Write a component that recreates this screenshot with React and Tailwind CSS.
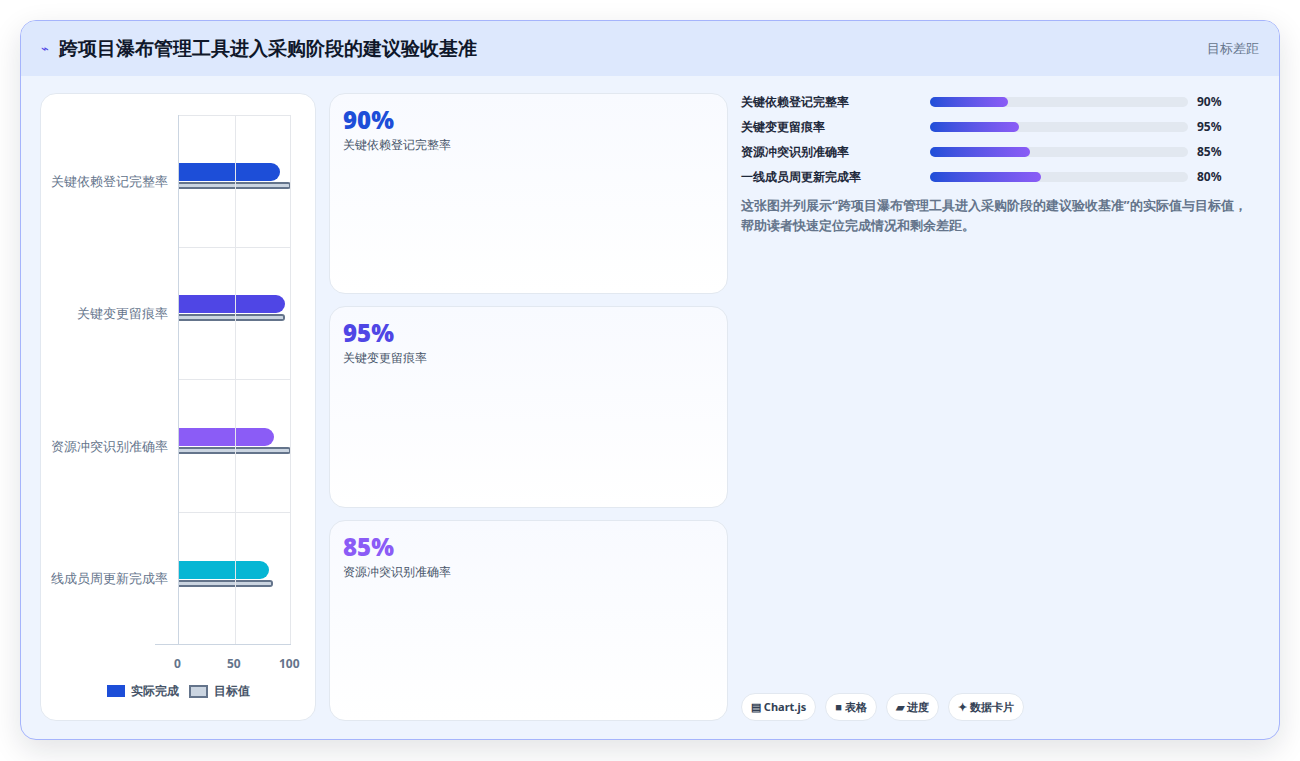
const rows = [
  { label: '关键依赖登记完整率', actual: 90, target: 100, color: 'bg-[#1d4ed8]' },
  { label: '关键变更留痕率', actual: 95, target: 95, color: 'bg-[#4f46e5]' },
  { label: '资源冲突识别准确率', actual: 85, target: 100, color: 'bg-[#8b5cf6]' },
  { label: '一线成员周更新完成率', actual: 80, target: 84, color: 'bg-[#06b6d4]' },
]

const cards = [
  { v: '90%', label: '关键依赖登记完整率', color: 'text-[#1d4ed8]' },
  { v: '95%', label: '关键变更留痕率', color: 'text-[#4f46e5]' },
  { v: '85%', label: '资源冲突识别准确率', color: 'text-[#8b5cf6]' },
]

const progress = [
  { label: '关键依赖登记完整率', w: 78, v: '90%' },
  { label: '关键变更留痕率', w: 89, v: '95%' },
  { label: '资源冲突识别准确率', w: 100, v: '85%' },
  { label: '一线成员周更新完成率', w: 111, v: '80%' },
]

function Chart() {
  return (
    <div className="flex w-[276px] shrink-0 flex-col rounded-2xl border border-[#e2e8f0] bg-white">
      <div className="flex pt-[21px]">
        <div className="flex w-[137px] flex-col">
          {rows.map((r) => (
            <div key={r.label} className="flex h-[132.5px] items-center justify-end overflow-hidden whitespace-nowrap pr-[10px] text-[13px] text-[#64748b]">
              <span>{r.label.length > 9 ? r.label.slice(1) : r.label}</span>
            </div>
          ))}
        </div>
        <div className="relative h-[530px] w-[112px] border-l border-[#cbd5e1]">
          <div className="absolute left-[56px] top-0 h-full w-px bg-[#e5e7eb]" />
          <div className="absolute left-[111px] top-0 h-full w-px bg-[#e5e7eb]" />
          <div className="absolute left-0 top-0 h-px w-full bg-[#e5e7eb]" />
          <div className="absolute -left-[24px] bottom-0 h-px w-[136px] bg-[#cbd5e1]" />
          {rows.map((r) => (
            <div key={r.label} className="flex h-[132.5px] flex-col justify-center border-b border-[#e5e7eb] last:border-b-0">
              <div className="mb-[10px] flex flex-col gap-px">
                <div className={`h-[18px] rounded-r-[9px] ${r.color}`} style={{ width: `${r.actual * 1.12}px` }} />
                <div className="h-[7px] rounded-r-[3px] border-2 border-l-0 border-[#64748b] bg-[#cbd5e1]" style={{ width: `${r.target * 1.12}px` }} />
              </div>
            </div>
          ))}
        </div>
      </div>
      <div className="relative ml-[137px] mt-[10px] h-[16px] w-[112px] text-[12px] font-bold text-[#64748b]">
        <span className="absolute -left-[4px]">0</span>
        <span className="absolute left-[49px]">50</span>
        <span className="absolute left-[101px]">100</span>
      </div>
      <div className="mt-[11px] flex items-center justify-center gap-[6px] text-[12px] font-bold text-[#475569]">
        <span className="h-[12px] w-[18px] bg-[#1d4ed8]" />
        <span>实际完成</span>
        <span className="ml-[4px] h-[13px] w-[19px] border-2 border-[#64748b] bg-[#cbd5e1]" />
        <span>目标值</span>
      </div>
    </div>
  )
}

export default function App() {
  return (
    <div className="min-h-screen bg-white p-[20px] font-['Noto_Sans_CJK_SC','Noto_Sans',sans-serif]">
      <div className="flex h-[720px] flex-col overflow-hidden rounded-2xl border border-[#a5b4fc] bg-[#eef4fe] shadow-[0_10px_30px_rgba(15,23,42,0.12)]">
        <div className="flex h-[55px] items-center justify-between bg-[#dde8fd] px-[20px]">
          <div className="flex items-center gap-[10px]">
            <span className="text-[13px] text-[#4f46e5]">⌁</span>
            <h1 className="text-[19px] font-bold text-[#0f172a]">跨项目瀑布管理工具进入采购阶段的建议验收基准</h1>
          </div>
          <span className="text-[13px] text-[#64748b]">目标差距</span>
        </div>
        <div className="flex flex-1 gap-[13px] px-[19px] pb-[18px] pt-[17px]">
          <Chart />
          <div className="flex w-[399px] shrink-0 flex-col gap-[12px]">
            {cards.map((c) => (
              <div key={c.v} className="flex-1 rounded-2xl border border-[#e2e8f0] bg-gradient-to-b from-[#f8faff] to-white px-[13px] pt-[10px]">
                <div className={`text-[24px] font-black leading-[32px] ${c.color}`}>{c.v}</div>
                <div className="text-[12px] text-[#475569]">{c.label}</div>
              </div>
            ))}
          </div>
          <div className="flex flex-1 flex-col pr-[1px]">
            <div className="flex flex-col gap-[7px]">
              {progress.map((p) => (
                <div key={p.label} className="flex h-[18px] items-center text-[12px] font-bold text-[#1e293b]">
                  <span className="w-[189px]">{p.label}</span>
                  <div className="h-[10px] w-[258px] rounded-full bg-[#e2e8f0]">
                    <div className="h-full rounded-full bg-gradient-to-r from-[#1d4ed8] to-[#8b5cf6]" style={{ width: `${p.w}px` }} />
                  </div>
                  <span className="ml-[9px]">{p.v}</span>
                </div>
              ))}
            </div>
            <p className="mt-[9px] text-[13px] font-bold leading-[20px] text-[#64748b]">
              这张图并列展示“跨项目瀑布管理工具进入采购阶段的建议验收基准”的实际值与目标值，帮助读者快速定位完成情况和剩余差距。
            </p>
            <div className="mt-auto flex gap-[9px] text-[11px] font-bold text-[#334155]">
              {['▤ Chart.js', '■ 表格', '▰ 进度', '✦ 数据卡片'].map((t) => (
                <span key={t} className="rounded-full border border-[#e2e8f0] bg-white px-[9px] py-[5px]">{t}</span>
              ))}
            </div>
          </div>
        </div>
      </div>
    </div>
  )
}
